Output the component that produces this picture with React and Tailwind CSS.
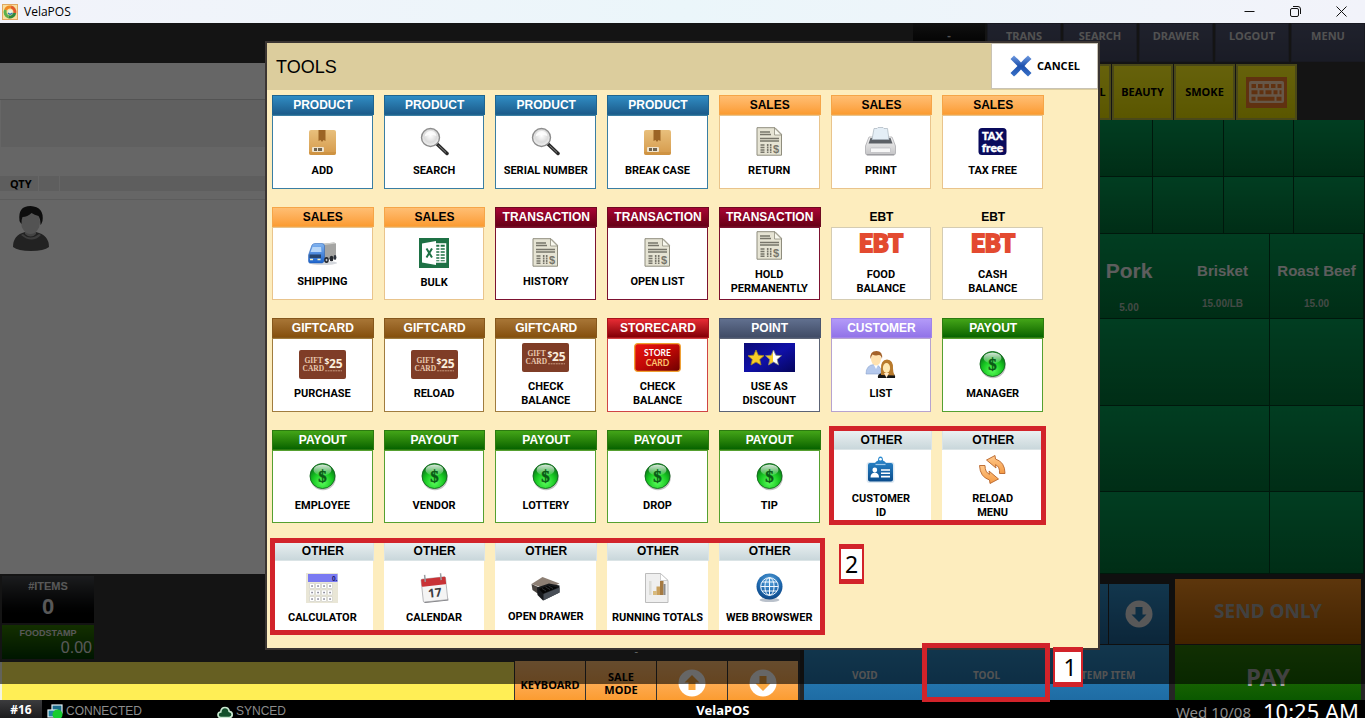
import React from "react";

const THEMES = {
  PRODUCT: {
    head: "bg-linear-to-b from-[#318dc4] to-[#1c5c8b] border-[#20658f] text-white",
    body: "border-[#3a7ea3]",
  },
  SALES: {
    head: "bg-linear-to-b from-[#ffbe72] to-[#fb9c30] border-[#f5a548] text-black",
    body: "border-[#e9c48c]",
  },
  TRANSACTION: {
    head: "bg-linear-to-b from-[#a80534] to-[#680016] border-[#6f0a22] text-white",
    body: "border-[#7c1230]",
  },
  EBT: {
    head: "border-transparent text-black",
    body: "border-[#d5ccb2]",
  },
  GIFTCARD: {
    head: "bg-linear-to-b from-[#a87636] to-[#85500c] border-[#85571c] text-white",
    body: "border-[#a07c3e]",
  },
  STORECARD: {
    head: "bg-linear-to-b from-[#e82c34] to-[#840006] border-[#a8141c] text-white",
    body: "border-[#cf4444]",
  },
  POINT: {
    head: "bg-linear-to-b from-[#61708f] to-[#414c66] border-[#4a556f] text-white",
    body: "border-[#5c6374]",
  },
  CUSTOMER: {
    head: "bg-linear-to-b from-[#b39af8] to-[#9273e8] border-[#a184ea] text-white",
    body: "border-[#b7a3cf]",
  },
  PAYOUT: {
    head: "bg-linear-to-b from-[#43a518] to-[#056400] border-[#2c7a10] text-white",
    body: "border-[#55a030]",
  },
  OTHER: {
    head: "bg-linear-to-b from-[#eaf0f1] to-[#c9d7db] border-[#dbe4e6] text-black",
    body: "border-white",
  },
};

const TOOLS = [
  { type: "PRODUCT", lines: ["ADD"], icon: "box" },
  { type: "PRODUCT", lines: ["SEARCH"], icon: "search" },
  { type: "PRODUCT", lines: ["SERIAL NUMBER"], icon: "search" },
  { type: "PRODUCT", lines: ["BREAK CASE"], icon: "box" },
  { type: "SALES", lines: ["RETURN"], icon: "invoice" },
  { type: "SALES", lines: ["PRINT"], icon: "printer" },
  { type: "SALES", lines: ["TAX FREE"], icon: "taxfree" },
  { type: "SALES", lines: ["SHIPPING"], icon: "truck" },
  { type: "SALES", lines: ["BULK"], icon: "excel" },
  { type: "TRANSACTION", lines: ["HISTORY"], icon: "invoice" },
  { type: "TRANSACTION", lines: ["OPEN LIST"], icon: "invoice" },
  { type: "TRANSACTION", lines: ["HOLD", "PERMANENTLY"], icon: "invoice" },
  { type: "EBT", lines: ["FOOD", "BALANCE"], icon: "ebt" },
  { type: "EBT", lines: ["CASH", "BALANCE"], icon: "ebt" },
  { type: "GIFTCARD", lines: ["PURCHASE"], icon: "giftcard" },
  { type: "GIFTCARD", lines: ["RELOAD"], icon: "giftcard" },
  { type: "GIFTCARD", lines: ["CHECK", "BALANCE"], icon: "giftcard" },
  { type: "STORECARD", lines: ["CHECK", "BALANCE"], icon: "storecard" },
  { type: "POINT", lines: ["USE AS", "DISCOUNT"], icon: "stars" },
  { type: "CUSTOMER", lines: ["LIST"], icon: "people" },
  { type: "PAYOUT", lines: ["MANAGER"], icon: "dollar" },
  { type: "PAYOUT", lines: ["EMPLOYEE"], icon: "dollar" },
  { type: "PAYOUT", lines: ["VENDOR"], icon: "dollar" },
  { type: "PAYOUT", lines: ["LOTTERY"], icon: "dollar" },
  { type: "PAYOUT", lines: ["DROP"], icon: "dollar" },
  { type: "PAYOUT", lines: ["TIP"], icon: "dollar" },
  { type: "OTHER", lines: ["CUSTOMER", "ID"], icon: "badge" },
  { type: "OTHER", lines: ["RELOAD", "MENU"], icon: "reload" },
  { type: "OTHER", lines: ["CALCULATOR"], icon: "calculator" },
  { type: "OTHER", lines: ["CALENDAR"], icon: "calendar" },
  { type: "OTHER", lines: ["OPEN DRAWER"], icon: "drawer" },
  { type: "OTHER", lines: ["RUNNING TOTALS"], icon: "report" },
  { type: "OTHER", lines: ["WEB BROWSWER"], icon: "globe" },
];

const TOP_BUTTONS = ["TRANS", "SEARCH", "DRAWER", "LOGOUT", "MENU"];

const MENU_ITEMS = {
  3: { name: "Pork", price: "5.00", big: true },
  4: { name: "Brisket", price: "15.00/LB" },
  5: { name: "Roast Beef", price: "15.00" },
};

const STAR = "M0 -8L2.3 -2.8L8 -2.3L3.7 1.4L5 7L0 4L-5 7L-3.7 1.4L-8 -2.3L-2.3 -2.8Z";

/* Shared gradients for the tool icons */
const IconDefs = () => (
  <svg className="absolute h-0 w-0" aria-hidden="true">
    <defs>
      <linearGradient id="gBox" x1="0" y1="0" x2="0" y2="1">
        <stop offset="0" stopColor="#e8bf7c" />
        <stop offset="1" stopColor="#d59a4a" />
      </linearGradient>
      <radialGradient id="gLens" cx="0.5" cy="0.4" r="0.6">
        <stop offset="0" stopColor="#ffffff" />
        <stop offset="0.6" stopColor="#dcdcdc" />
        <stop offset="1" stopColor="#f4f4f4" />
      </radialGradient>
      <linearGradient id="gPrinter" x1="0" y1="0" x2="0" y2="1">
        <stop offset="0" stopColor="#f4f4f4" />
        <stop offset="1" stopColor="#c4c4c6" />
      </linearGradient>
      <radialGradient id="gCoin" cx="0.5" cy="0.75" r="0.65">
        <stop offset="0" stopColor="#5cff5c" />
        <stop offset="0.6" stopColor="#18c822" />
        <stop offset="1" stopColor="#0a7b18" />
      </radialGradient>
      <linearGradient id="gShine" x1="0" y1="0" x2="0" y2="1">
        <stop offset="0" stopColor="#ffffff" stopOpacity="0.85" />
        <stop offset="1" stopColor="#ffffff" stopOpacity="0.1" />
      </linearGradient>
      <linearGradient id="gStore" x1="0" y1="0" x2="1" y2="1">
        <stop offset="0" stopColor="#ee1410" />
        <stop offset="0.5" stopColor="#c00806" />
        <stop offset="1" stopColor="#6c0000" />
      </linearGradient>
      <linearGradient id="gPoint" x1="0" y1="0" x2="1" y2="1">
        <stop offset="0" stopColor="#0a0a78" />
        <stop offset="0.5" stopColor="#1010a8" />
        <stop offset="1" stopColor="#05055c" />
      </linearGradient>
      <linearGradient id="gHalf" x1="0" y1="0" x2="1" y2="0">
        <stop offset="0.5" stopColor="#f7cc28" />
        <stop offset="0.5" stopColor="#ffffff" />
      </linearGradient>
      <linearGradient id="gTruck" x1="0" y1="0" x2="0" y2="1">
        <stop offset="0" stopColor="#82b4f0" />
        <stop offset="1" stopColor="#1d64cc" />
      </linearGradient>
      <radialGradient id="gGlobe" cx="0.5" cy="0.3" r="0.75">
        <stop offset="0" stopColor="#5aa4dc" />
        <stop offset="0.6" stopColor="#1c66ac" />
        <stop offset="1" stopColor="#0b3f7c" />
      </radialGradient>
      <linearGradient id="gReload" x1="0" y1="0" x2="0" y2="1">
        <stop offset="0" stopColor="#ffc98c" />
        <stop offset="1" stopColor="#f49a44" />
      </linearGradient>
      <linearGradient id="gCancel" x1="0" y1="0" x2="0" y2="1">
        <stop offset="0" stopColor="#6f9ae0" />
        <stop offset="0.5" stopColor="#1c50ae" />
        <stop offset="1" stopColor="#3a72c8" />
      </linearGradient>
      <linearGradient id="gIdCard" x1="0" y1="0" x2="0" y2="1">
        <stop offset="0" stopColor="#2f8fd4" />
        <stop offset="1" stopColor="#0a4c8c" />
      </linearGradient>
    </defs>
  </svg>
);

const ToolIcon = ({ name }) => {
  switch (name) {
    case "box":
      return (
        <svg className="h-[29px] w-[29px]" viewBox="0 0 29 29">
          <rect x="1" y="3" width="27" height="25" rx="2" fill="url(#gBox)" />
          <path d="M1 25q0 3 2 3h23q2 0 2-3z" fill="#c98d3c" opacity="0.6" />
          <path d="M10.500 3h7v11l-2-1-1.500 2-1.500-2-2 1z" fill="#9c6425" />
          <rect x="4" y="20" width="12" height="5" rx="1" fill="#efe3cd" />
          <path d="M6 21h3v3h-3zM10 21h4v3h-4z" fill="#6e6350" />
        </svg>
      );
    case "search":
      return (
        <svg className="h-[29px] w-[29px]" viewBox="0 0 29 29">
          <path d="M17 17L27 26.500" stroke="#2a2a2a" strokeWidth="3.500" strokeLinecap="round" />
          <path d="M18.500 18.500L26 25.500" stroke="#9a9a9a" strokeWidth="0.800" />
          <circle cx="10.500" cy="10.500" r="9" fill="url(#gLens)" stroke="#8d8d8d" strokeWidth="1.400" />
          <path d="M4.500 9.500q1-5 6-5.500 5 0 6 5-6-2-12 0.500z" fill="#ffffff" opacity="0.8" />
        </svg>
      );
    case "invoice":
      return (
        <svg className="h-[29px] w-[29px]" viewBox="0 0 29 29">
          <path d="M2 0.700h18l6.500 6.500v21h-24.500z" fill="#e6e4d4" stroke="#8f8d7e" />
          <path d="M19.500 1v7h7z" fill="#f8f8ee" stroke="#8f8d7e" strokeWidth="0.800" />
          <path d="M5 5h10M5 7.500h11M5 11.500h19M5 14h19" stroke="#77756a" strokeWidth="1.500" />
          <path d="M5.500 18h4M5.500 20.500h4M5.500 23h4M5.500 25.300h4" stroke="#77756a" strokeWidth="1.600" />
          <path d="M12.700 17v9M15.700 17v9" stroke="#77756a" strokeWidth="1.600" strokeDasharray="2 0.500" />
          <text x="18" y="26" fontFamily="Liberation Sans, sans-serif" fontSize="11" fontWeight="bold" fill="#77756a">$</text>
        </svg>
      );
    case "printer":
      return (
        <svg className="h-[29px] w-[31px]" viewBox="0 0 31 29">
          <path d="M4 10h23l3.500 9v7q0 2-2 2h-26q-2 0-2-2v-7z" fill="url(#gPrinter)" stroke="#a4a4a8" strokeWidth="0.700" />
          <path d="M5.500 11h20l2 5.500h-24z" fill="#5c6066" />
          <path d="M9 1.500h3l1-1h5l1 1h3.500l1.500 11h-17z" fill="#e4eef6" stroke="#a9b4bd" strokeWidth="0.700" />
          <rect x="5.500" y="21" width="20" height="4.500" rx="0.800" fill="#f7f7f7" stroke="#b4b4b8" strokeWidth="0.600" />
          <path d="M2 27.800h27" stroke="#88888c" strokeWidth="0.800" />
        </svg>
      );
    case "taxfree":
      return (
        <svg className="h-[29px] w-[29px]" viewBox="0 0 29 29">
          <rect x="0.500" y="1" width="28" height="27" rx="3.500" fill="#090a5c" />
          <g fontFamily="Lato, sans-serif" fontWeight="900" fill="#ffffff" stroke="#ffffff" strokeWidth="0.400" textAnchor="middle">
            <text x="14.500" y="12.500" fontSize="11">TAX</text>
            <text x="14.500" y="24.500" fontSize="12">free</text>
          </g>
        </svg>
      );
    case "truck":
      return (
        <svg className="h-[29px] w-[31px]" viewBox="0 0 31 29">
          <ellipse cx="16" cy="25" rx="14" ry="2" fill="#b8bcc4" opacity="0.6" />
          <path d="M14 6l13-1.500 2 1v14l-12 3.500z" fill="#a5a5a3" />
          <path d="M14 6l13-1.500 2 1-12 1.500z" fill="#cfcfcb" />
          <path d="M5 7q1-1.500 3-1.500h7q2.500 0 2.500 2.500v15l-2 2h-12.500q-1.500 0-1.500-2v-6z" fill="url(#gTruck)" stroke="#1e58b0" strokeWidth="0.500" />
          <path d="M5.500 9h8.500l0.500 5h-11z" fill="#b7d6f7" />
          <path d="M2.500 16.500h11.500v3.500h-11.500z" fill="#26456e" />
          <path d="M3 21.500h3M10.500 21.500h3" stroke="#f4f4c8" strokeWidth="1.500" />
          <ellipse cx="19.500" cy="22" rx="2.300" ry="3" fill="#23272e" />
          <ellipse cx="24.500" cy="20.500" rx="2" ry="2.700" fill="#23272e" />
          <ellipse cx="28" cy="19.500" rx="1.400" ry="2.400" fill="#2f3640" />
          <ellipse cx="19.500" cy="22" rx="0.900" ry="1.200" fill="#bcc3cc" />
        </svg>
      );
    case "excel":
      return (
        <svg className="h-[30px] w-[30px]" viewBox="0 0 30 30">
          <rect width="30" height="30" fill="#1e7145" />
          <rect x="16.500" y="6" width="10" height="18" fill="none" stroke="#ffffff" strokeWidth="1.500" />
          <path d="M17 9.500h9M17 12.500h9M17 15.500h9M17 18.500h9M17 21.500h9M21 6v18" stroke="#ffffff" strokeWidth="1.300" />
          <path d="M3 5.500L17 3v24L3 24.500z" fill="#ffffff" />
          <path d="M7.500 10.500l5.500 9M13 10.500l-5.500 9" stroke="#1e7145" strokeWidth="2" />
        </svg>
      );
    case "ebt":
      return (
        <svg className="h-[29px] w-[50px] overflow-visible" viewBox="0 0 50 29">
          <text x="25" y="21" textAnchor="middle" fontFamily="Lato, sans-serif" fontSize="24" fontWeight="900" fill="#e34a30" stroke="#e34a30" strokeWidth="2">EBT</text>
        </svg>
      );
    case "giftcard":
      return (
        <svg className="h-[29px] w-[47px]" viewBox="0 0 47 29">
          <rect width="47" height="29" rx="2" fill="#7f3d27" />
          <g fontFamily="Liberation Serif, serif" fontSize="7.500" fill="#e9c9ae">
            <text x="5.500" y="13">GIFT</text>
            <text x="3.500" y="21">CARD</text>
          </g>
          <g fontFamily="Open Sans, sans-serif" fontWeight="bold" fill="#fbeedd">
            <text x="25.500" y="15" fontSize="8.500">$</text>
            <text x="30" y="18" fontSize="12">25</text>
          </g>
          <path d="M26 20.800h17" stroke="#c99c80" strokeWidth="1" strokeDasharray="2 0.600" />
        </svg>
      );
    case "storecard":
      return (
        <svg className="h-[29px] w-[47px]" viewBox="0 0 47 29">
          <rect x="0.700" y="0.700" width="45.600" height="27.600" rx="3" fill="url(#gStore)" stroke="#f0a030" strokeWidth="1.300" />
          <g fontFamily="Lato, sans-serif" fontSize="8.500" fontWeight="bold" textAnchor="middle">
            <text x="23.500" y="12.500" fill="#ffffff">STORE</text>
            <text x="23.500" y="22.500" fill="#fbc470">CARD</text>
          </g>
        </svg>
      );
    case "stars":
      return (
        <svg className="h-[29px] w-[51px]" viewBox="0 0 51 29">
          <rect width="51" height="29" fill="url(#gPoint)" />
          <path d={STAR} transform="translate(12 15)" fill="#f7cc28" stroke="#a88a20" strokeWidth="0.800" />
          <path d={STAR} transform="translate(29.500 15)" fill="url(#gHalf)" stroke="#8c8c78" strokeWidth="0.800" />
        </svg>
      );
    case "people":
      return (
        <svg className="h-[29px] w-[31px]" viewBox="0 0 31 29">
          <path d="M1 24q0-9 8-9.500 5 0 6.500 4v5.500z" fill="#b4c8ec" stroke="#8aa2cc" strokeWidth="0.600" />
          <path d="M9 15l2 4 2-4z" fill="#ffffff" />
          <ellipse cx="11" cy="9" rx="5" ry="6.500" fill="#ffe2b0" />
          <path d="M5.500 9q-1-8 6-8 6.500 0 5.500 8-1-4-3-4-4 1-6.500-0.500-1 1-2 4.500z" fill="#a4622a" />
          <path d="M13 28q-1-4 4-5h9q5 1 4 5z" fill="#151515" />
          <path d="M16 25q0-2 0-6-0.500-9 6-9.500 6.500 0.500 6 9 0 4 1.500 7z" fill="#b87a2c" />
          <ellipse cx="21.500" cy="18" rx="3.600" ry="5" fill="#ffe9b4" />
          <path d="M19 23h5l-2.500 5z" fill="#ffe9c8" />
        </svg>
      );
    case "dollar":
      return (
        <svg className="h-[29px] w-[29px]" viewBox="0 0 29 29">
          <circle cx="15" cy="15.500" r="12.800" fill="#8c8c8c" opacity="0.55" />
          <circle cx="14.500" cy="14" r="12.500" fill="url(#gCoin)" stroke="#116a1c" strokeWidth="0.900" />
          <ellipse cx="14.500" cy="8" rx="9" ry="5.500" fill="url(#gShine)" />
          <text x="14.500" y="20" textAnchor="middle" fontFamily="Liberation Serif, serif" fontSize="17" fill="#0a5a16" stroke="#0a5a16" strokeWidth="0.400">$</text>
        </svg>
      );
    case "badge":
      return (
        <svg className="h-[29px] w-[29px]" viewBox="0 0 29 29">
          <rect x="0.500" y="7" width="28" height="21" rx="3" fill="#dce8f2" />
          <path d="M2 10q0-2 2-2h5q1-2 3-2.500 0-4 2.500-4t2.500 4q2 0.500 3 2.500h5q2 0 2 2v14.500q0 2-2 2h-21q-2 0-2-2z" fill="url(#gIdCard)" />
          <circle cx="14.500" cy="4.300" r="1.300" fill="#ffffff" />
          <path d="M9.500 9.500h10" stroke="#9ec8ea" strokeWidth="1.200" />
          <circle cx="8.800" cy="15" r="2.400" fill="#ffffff" />
          <path d="M4.500 22.500q0-4.500 4.300-5 4.200 0.500 4.200 5z" fill="#ffffff" />
          <path d="M15 15h9M15 18.300h9M15 21.600h9" stroke="#ffffff" strokeWidth="1.600" />
        </svg>
      );
    case "reload":
      return (
        <svg className="h-[29px] w-[29px]" viewBox="0 0 29 29">
          <g fill="url(#gReload)" stroke="#b8642a" strokeWidth="0.900" strokeLinejoin="round">
            <path d="M8.500 5L17 0.500L17.500 4q9.500 3 9.500 14.500h-5.500q0.500-7-4-8.800l0.500 3.300z" />
            <path d="M20.500 24L12 28.500L11.500 25q-9.500-3-10-14.500h5.500q0 7 4.500 8.800l-0.500-3.300z" />
          </g>
        </svg>
      );
    case "calculator":
      return (
        <svg className="h-[30px] w-[32px]" viewBox="0 0 32 30">
          <rect width="32" height="30" fill="#e9e6d6" />
          <rect x="2" y="1" width="29.500" height="8" fill="#7a7af2" />
          <text x="26" y="7.500" fontFamily="Liberation Sans, sans-serif" fontSize="6.500" fontWeight="bold" fill="#101060">0.</text>
          {[10.5, 17, 23.5].map((y) =>
            [3.5, 9.5, 15.5, 21.5].map((x) => (
              <g key={`${x}-${y}`}>
                <rect x={x} y={y} width="5" height="5" rx="0.500" fill="#ffffff" stroke="#c4c4bc" strokeWidth="0.500" />
                <rect x={x + 1.8} y={y + 1.8} width="1.500" height="1.500" fill="#77778c" />
              </g>
            ))
          )}
        </svg>
      );
    case "calendar":
      return (
        <svg className="h-[30px] w-[29px]" viewBox="0 0 29 30">
          <g transform="rotate(-6 14 15)">
            <path d="M3 27h24v2h-24z" fill="#7a7a7e" />
            <rect x="2" y="5" width="24.500" height="23" rx="1" fill="#f4f4f4" stroke="#a0a0a4" strokeWidth="0.700" />
            <rect x="2" y="5" width="24.500" height="7.500" rx="1" fill="#c83236" />
            <path d="M6 1v7M22 1v7" stroke="#9a9ca0" strokeWidth="1.500" />
            <text x="14.300" y="24" textAnchor="middle" fontFamily="Open Sans, sans-serif" fontSize="12" fontWeight="bold" fill="#3c3c40">17</text>
          </g>
        </svg>
      );
    case "drawer":
      return (
        <svg className="h-[29px] w-[31px]" viewBox="0 0 31 29">
          <path d="M1.500 11L12.500 4l17 6.500-12 6z" fill="#8d7f74" />
          <path d="M1.500 11l9 4v7.500l-8-5.500z" fill="#4a4440" />
          <path d="M7 14.500l12-4 10.500 2v7L13 27.500l-5.500-5.500z" fill="#17191c" />
          <path d="M9 16l10-3.500 8.500 2-14.500 6z" fill="#050505" />
          <path d="M12 15.500l4 2.500M15.500 14l4.500 2.500M18.500 13l4.500 2.500" stroke="#3e4248" strokeWidth="0.700" />
          <path d="M13.500 21l16-6.500v5L13.500 27.500z" fill="#484e56" />
        </svg>
      );
    case "report":
      return (
        <svg className="h-[30px] w-[29px]" viewBox="0 0 29 30">
          <path d="M2.500 0.500h15l7.500 7v22h-22.500z" fill="#efefef" stroke="#bcbcbc" />
          <path d="M17.500 0.500v7h7.500z" fill="#ffffff" stroke="#bcbcbc" strokeWidth="0.700" />
          <rect x="6" y="8" width="2.500" height="14" fill="#dcdcd8" />
          <rect x="10" y="18" width="3.500" height="4" fill="#d8ba7c" />
          <rect x="13.500" y="13.500" width="3.500" height="8.500" fill="#c9a05c" />
          <rect x="17" y="8" width="3.500" height="14" fill="#a57a42" />
          <rect x="20.500" y="11" width="2" height="11" fill="#8c8c8c" />
        </svg>
      );
    case "globe":
      return (
        <svg className="h-[30px] w-[29px]" viewBox="0 0 29 30">
          <ellipse cx="14.500" cy="27" rx="10" ry="2" fill="#8c98a8" opacity="0.6" />
          <circle cx="14.500" cy="13.500" r="13" fill="url(#gGlobe)" />
          <g fill="none" stroke="#f2f8ff" strokeWidth="1">
            <circle cx="14.500" cy="13.500" r="8.800" />
            <ellipse cx="14.500" cy="13.500" rx="4.600" ry="8.800" />
            <path d="M14.500 4.700v17.600M5.700 13.500h17.600M7.200 9h14.600M7.200 18h14.600" />
          </g>
        </svg>
      );
    default:
      return null;
  }
};

const ArrowIcon = ({ down, color, hole }) => (
  <svg className="h-7 w-7" viewBox="0 0 28 28">
    <circle cx="14" cy="14" r="13.500" fill={color} />
    <path
      d="M14 6L21.500 13.500H17.500V21H10.500V13.500H6.500Z"
      fill={hole}
      transform={down ? "rotate(180 14 14)" : undefined}
    />
  </svg>
);

const TitleBar = () => (
  <header className="flex h-[23px] items-center justify-between bg-linear-to-r from-[#f2f3fa] via-[#ebf6fa] to-[#f2f3fa] pr-px pl-[2px]">
    <div className="flex items-center gap-[6px]">
      <svg className="h-4 w-4" viewBox="0 0 16 16">
        <rect x="0.500" y="0.500" width="15" height="15" fill="#f8dfa0" stroke="#e0a860" />
        <g fill="none" strokeWidth="3">
          <path d="M3.500 6A5 5 0 0 1 9 3" stroke="#f08a24" />
          <path d="M9 3A5 5 0 0 1 12.800 9" stroke="#e05a2c" />
          <path d="M12.800 9A5 5 0 0 1 6.500 12.800" stroke="#2c8a3c" />
          <path d="M6.500 12.800A5 5 0 0 1 3.500 6" stroke="#5cb04c" />
        </g>
        <circle cx="8.200" cy="8" r="2.300" fill="#e8f4e0" />
        <path d="M6 9q2 2.500 4.500 0" stroke="#2878b0" strokeWidth="1.300" fill="none" />
      </svg>
      <h1 className="font-['Open_Sans',sans-serif] text-[12px] text-black">VelaPOS</h1>
    </div>
    <div className="flex h-full">
      <button className="flex w-[46px] items-center justify-center" aria-label="Minimize">
        <svg className="h-[11px] w-[11px]" viewBox="0 0 11 11">
          <path d="M0.500 5.500h10" stroke="#111111" />
        </svg>
      </button>
      <button className="flex w-[46px] items-center justify-center" aria-label="Restore">
        <svg className="h-[11px] w-[11px]" viewBox="0 0 11 11" fill="none" stroke="#111111">
          <rect x="0.500" y="2.500" width="8" height="8" rx="1.500" />
          <path d="M3 0.500h5q2.500 0 2.500 2.500v5" />
        </svg>
      </button>
      <button className="flex w-[46px] items-center justify-center" aria-label="Close">
        <svg className="h-[11px] w-[11px]" viewBox="0 0 11 11">
          <path d="M0.500 0.500l10 10M10.500 0.500l-10 10" stroke="#111111" />
        </svg>
      </button>
    </div>
  </header>
);

const OrderPanel = () => (
  <section className="flex flex-[800] flex-col bg-[#333333]">
    <div className="flex flex-1 flex-col bg-white">
      <div className="h-[37px] border-b border-[#d0d0d0]" />
      <div className="ml-px h-[47px] bg-[#f1f1f1]" />
      <div className="mt-[29px] flex h-[15px] bg-[#ececec] pl-[2px]">
        <span className="w-[37px] border-r border-white pl-2 font-['Noto_Sans',sans-serif] text-[11px] leading-[15px] font-bold">
          QTY
        </span>
        <span className="w-[21px] border-r border-white" />
      </div>
      <div className="h-[9px] border-b border-[#e6e6e6]" />
      <svg className="mt-1.5 ml-3 h-[46px] w-[38px]" viewBox="0 0 38 46">
        <path d="M1 41q0-12 12-15l0.500-6h10l0.500 6q13 3 13 15-5 4-18 4t-18-4z" fill="#555555" />
        <path d="M13 20h11v8q-5 5-11 0z" fill="#aaaaaa" />
        <path d="M11 28q7 7 16 0l2 1q-9 9-20 0z" fill="#999999" />
        <ellipse cx="18.500" cy="16" rx="9.500" ry="12" fill="#cfcfcf" />
        <path d="M7.500 15q-2-15 11-15 14 1 12 15-1 3-2 4 0-6-2-9-4-1-7-3-4 4-9 4-1 2-1 7-1-1-2-3z" fill="#222222" />
      </svg>
    </div>

    <div className="flex h-[87px] items-start justify-between">
      <div className="ml-[2px] flex w-[92px] flex-col gap-[2px] pt-[2px] font-['Liberation_Sans',Arial,sans-serif] font-bold text-[#dddddd]">
        <div className="h-[47px] bg-linear-to-b from-[#45484c] to-black text-center">
          <p className="pt-1 text-[11px] leading-[13px]">#ITEMS</p>
          <p className="text-[22px] leading-[28px]">0</p>
        </div>
        <div className="h-[34px] bg-linear-to-b from-[#327800] to-[#003800]">
          <p className="pt-[2px] text-center text-[9px] leading-[12px]">FOODSTAMP</p>
          <p className="pr-[2px] text-right text-[16px] leading-[17px] font-normal">0.00</p>
        </div>
      </div>
      <p className="self-end pr-[162px] text-[11px] leading-[20px] text-white">-</p>
    </div>

    <div className="flex h-[39px] bg-[#333333] font-['Noto_Sans',sans-serif] text-[11px] leading-[13px] font-bold text-black">
      <input
        aria-label="Scan or enter item"
        className="mt-px min-w-0 flex-1 border-l-2 border-l-[#f4f4e0] bg-[#ffee55] outline-none"
      />
      <div className="flex gap-px pl-px pr-[2px]">
        <button className="w-[70px] bg-linear-to-b from-[#ffbe72] to-[#fb9c30] pt-2">KEYBOARD</button>
        <button className="w-[70px] bg-linear-to-b from-[#ffbe72] to-[#fb9c30] px-3 pt-1">SALE MODE</button>
        <button className="flex w-[70px] items-center justify-center bg-linear-to-b from-[#ffbe72] to-[#fb9c30] pt-1" aria-label="Up">
          <ArrowIcon color="#ffffff" hole="#fba840" />
        </button>
        <button className="flex w-[70px] items-center justify-center bg-linear-to-b from-[#ffbe72] to-[#fb9c30] pt-1" aria-label="Down">
          <ArrowIcon down color="#ffffff" hole="#fba840" />
        </button>
      </div>
    </div>
  </section>
);

const MenuPanel = () => (
  <section className="flex flex-[565] flex-col bg-[#262626]">
    <div className="flex h-[57px] justify-end gap-px bg-[#333333] pr-[68px] pt-px font-['Noto_Sans',sans-serif] text-[11px] font-bold text-black">
      {["GENERAL", "BEAUTY", "SMOKE"].map((name) => (
        <button key={name} className="w-[61px] border-2 border-[#b8b43c] bg-linear-to-b from-[#fff41c] to-[#e2d800]">
          {name}
        </button>
      ))}
      <button
        aria-label="Keyboard"
        className="flex w-[61px] items-center justify-center border-2 border-[#b8b43c] bg-linear-to-b from-[#fff41c] to-[#e2d800]"
      >
        <svg className="h-[31px] w-[41px]" viewBox="0 0 41 31">
          <rect width="41" height="31" fill="#f07c28" />
          <rect x="3" y="4" width="35" height="22" rx="2" fill="#ffd9b4" />
          <g stroke="#f07c28" strokeWidth="4" fill="none">
            <path d="M5.500 9h30" strokeDasharray="4.500 2" />
            <path d="M5.500 15.200h30" strokeDasharray="6 2 4 2" />
            <path d="M5.500 21.800h4M11.500 21.800h17M30.500 21.800h5" />
          </g>
        </svg>
      </button>
    </div>

    <div className="grid flex-[114] grid-cols-8 grid-rows-2">
      {Array.from({ length: 16 }, (_, i) => (
        <div key={i} className="border-r border-b border-[#003c1e] bg-linear-to-b from-[#049a54] to-[#027238]" />
      ))}
    </div>

    <div className="grid flex-[340] grid-cols-6 grid-rows-[85fr_87fr_86fr_82fr] pr-px font-['Liberation_Sans',Arial,sans-serif] font-bold">
      {Array.from({ length: 24 }, (_, i) => {
        const item = MENU_ITEMS[i];
        const edge = i % 6 > 3 ? "border-r" : "";
        if (!item) {
          return <div key={i} className={`border-b border-[#003c1e] bg-linear-to-b from-[#049a54] to-[#027238] ${edge}`} />;
        }
        return (
          <button
            key={i}
            className={`flex flex-col items-center justify-between overflow-hidden border-b border-[#003c1e] bg-linear-to-b from-[#049a54] to-[#027238] pt-[25px] whitespace-nowrap text-[#e8e8e8] ${edge} ${item.big ? "" : "pb-1"}`}
          >
            <span className={item.big ? "text-[21px] leading-6" : "text-[15px] leading-6"}>{item.name}</span>
            <span className="text-[10px] leading-5 text-[#a8b8ae]">{item.price}</span>
          </button>
        );
      })}
    </div>

    <div className="flex h-[126px] gap-[6px] pl-1 pr-1 pt-[5px] font-['Noto_Sans',sans-serif] font-bold">
      <div className="flex flex-1 flex-col gap-px pt-[5px]">
        <div className="flex h-[60px] justify-end gap-px">
          <button className="flex w-[60px] items-center justify-center bg-linear-to-b from-[#2e88c0] to-[#1e5f90]" aria-label="Page up">
            <ArrowIcon color="#dddddd" hole="#2474a8" />
          </button>
          <button className="flex w-[60px] items-center justify-center bg-linear-to-b from-[#2e88c0] to-[#1e5f90]" aria-label="Page down">
            <ArrowIcon down color="#dddddd" hole="#2474a8" />
          </button>
        </div>
        <div className="flex flex-1 text-[10px] text-[#d0d0d0]">
          {["VOID", "TOOL", "TEMP ITEM"].map((name) => (
            <button key={name} className="flex-1 bg-linear-to-b from-[#2e88c0] to-[#1e6ca4] pt-1.5">
              {name}
            </button>
          ))}
        </div>
      </div>
      <div className="flex w-[186px] flex-col gap-px text-[19px] text-[#a4a4a4] text-shadow-[1px_1px_0_#ffffff]">
        <button className="h-[65px] bg-linear-to-b from-[#e88820] to-[#a85800]">SEND ONLY</button>
        <button className="flex-1 bg-linear-to-b from-[#2c7808] to-[#0a5800] pt-2 text-[24px] leading-6">PAY</button>
      </div>
    </div>
  </section>
);

const ToolTile = ({ tool }) => {
  const theme = THEMES[tool.type];
  return (
    <button className="flex min-w-0 flex-col font-bold">
      <span className={`h-5 w-full border text-[12px] leading-[18px] ${theme.head}`}>{tool.type}</span>
      <span
        className={`mr-px flex flex-1 flex-col items-center justify-center gap-2 self-stretch border bg-white pt-px ${theme.body}`}
      >
        <ToolIcon name={tool.icon} />
        <span className="font-['Roboto',sans-serif] text-[11px] leading-[14px] whitespace-nowrap text-black">
          {tool.lines.map((line) => (
            <span key={line} className="block">
              {line}
            </span>
          ))}
        </span>
      </span>
    </button>
  );
};

const ToolsDialog = () => (
  <div
    role="dialog"
    aria-label="Tools"
    className="relative h-[609px] w-[835px] max-w-full border-2 border-[#3b3532] bg-[#fdedbe] font-['Liberation_Sans',Arial,sans-serif]"
  >
    <div className="flex h-full flex-col">
      <div className="flex h-[47px] justify-between bg-[#dccd9d]">
        <h2 className="pl-[9px] text-[18px] leading-[49px] text-black">TOOLS</h2>
        <button className="mb-px flex w-[107px] items-center justify-center gap-1 border border-[#c9c3b4] bg-white font-['Noto_Sans',sans-serif] text-[11px] font-bold text-black">
          <svg className="h-6 w-6" viewBox="0 0 24 24">
            <path
              d="M1.500 5L5 1.500Q9 5 12 8.500Q15 5 19 1.500L22.500 5Q18.500 8.500 15.500 12Q19 15.500 22.500 19L19 22.500Q15 19 12 15.500Q9 19 5 22.500L1.500 19Q5 15.500 8.500 12Q5 8.500 1.500 5Z"
              fill="url(#gCancel)"
            />
          </svg>
          CANCEL
        </button>
      </div>
      <div className="grid flex-1 grid-cols-7 grid-rows-5 gap-x-2.5 gap-y-[18px] pt-[5px] pr-[54px] pb-[13px] pl-[5px]">
        {TOOLS.map((tool, i) => (
          <ToolTile key={i} tool={tool} />
        ))}
      </div>
    </div>

    {/* Numbered callouts */}
    <div className="pointer-events-none absolute top-[383px] left-[562px] h-[99px] w-[217px] border-5 border-[#d2232a]" />
    <div className="pointer-events-none absolute top-[495px] left-[3px] h-[97px] w-[555px] border-5 border-[#d2232a]" />
    <div className="pointer-events-none absolute top-[600px] left-[655px] h-[59px] w-[128px] border-5 border-[#d2232a]" />
    <span className="absolute top-[501px] left-[572px] flex h-10 w-[25px] items-center justify-center border-x-2 border-y-5 border-[#d2232a] bg-white font-['Noto_Sans',sans-serif] text-[23px] text-black">
      2
    </span>
    <span className="absolute top-[604px] left-[786px] flex h-10 w-[30px] items-center justify-center border-x-2 border-y-5 border-[#d2232a] bg-white pl-1 font-['Noto_Sans',sans-serif] text-[23px] text-black">
      1
    </span>
  </div>
);

const StatusBar = () => (
  <footer className="flex h-[18px] items-start overflow-hidden bg-black font-['Liberation_Sans',Arial,sans-serif] text-[12px] leading-[23px] text-[#8c8c8c]">
    <div className="flex min-w-0 flex-[698]">
      <span className="h-[18px] w-[42px] bg-linear-to-b from-[#3c3c3e] to-[#1c1c1e] text-center font-['Noto_Sans',sans-serif] leading-[20px] font-bold text-white">
        #16
      </span>
      <span className="flex w-[175px] pl-[5px]">
        <svg className="mt-1 mr-[3px] h-4 w-4" viewBox="0 0 16 16">
          <rect x="5" y="1" width="10" height="8" fill="#1c6c8c" stroke="#e4f0f4" strokeWidth="1.200" />
          <rect x="1" y="6" width="9" height="7" fill="#2484a4" stroke="#e4f0f4" strokeWidth="1.200" />
          <circle cx="10.500" cy="10.500" r="5" fill="#18cc30" />
        </svg>
        CONNECTED
      </span>
      <span className="flex">
        <svg className="mt-1.5 mr-[3px] h-[13px] w-4" viewBox="0 0 16 13">
          <path d="M4 11.500q-3 0-3-2.700 0-2.500 2.700-2.800 0.500-4.500 4.300-4.500 3.500 0 4.200 3.800 3 0.500 3 3.300 0 2.900-3 2.900z" fill="#14502c" stroke="#c8e8d0" strokeWidth="1.700" />
        </svg>
        SYNCED
      </span>
    </div>
    <span className="font-['Noto_Sans',sans-serif] text-[13px] leading-5 font-bold text-white">VelaPOS</span>
    <div className="flex min-w-0 flex-[611] justify-end gap-3 pr-[6px] font-['Noto_Sans',sans-serif]">
      <span className="text-[15px] leading-[25px]">Wed 10/08</span>
      <span className="text-[22px] text-white">10:25 AM</span>
    </div>
  </footer>
);

const App = () => {
  return (
    <div className="flex min-h-screen flex-col overflow-hidden bg-black">
      <IconDefs />
      <TitleBar />
      <main className="relative flex flex-1 flex-col">
        <div className="flex h-10 justify-end gap-[2px] bg-[#333333] font-['Noto_Sans',sans-serif] text-[11px] leading-[14px] font-bold text-[#cccccc]">
          <span className="w-[72px] bg-linear-to-b from-[#2a2a2a] to-black pt-[5px] text-center">-</span>
          {TOP_BUTTONS.map((name) => (
            <button
              key={name}
              className="mb-px flex w-[74px] justify-center border border-[#3c4054] bg-linear-to-b from-[#505570] to-[#42465e] pt-[5px]"
            >
              {name}
            </button>
          ))}
        </div>
        <div className="flex flex-1">
          <OrderPanel />
          <MenuPanel />
        </div>
        <div className="absolute inset-x-0 top-0 bottom-4 z-10 flex items-start justify-center bg-black/60 pt-[18px]">
          <ToolsDialog />
        </div>
      </main>
      <StatusBar />
    </div>
  );
};

export default App;
